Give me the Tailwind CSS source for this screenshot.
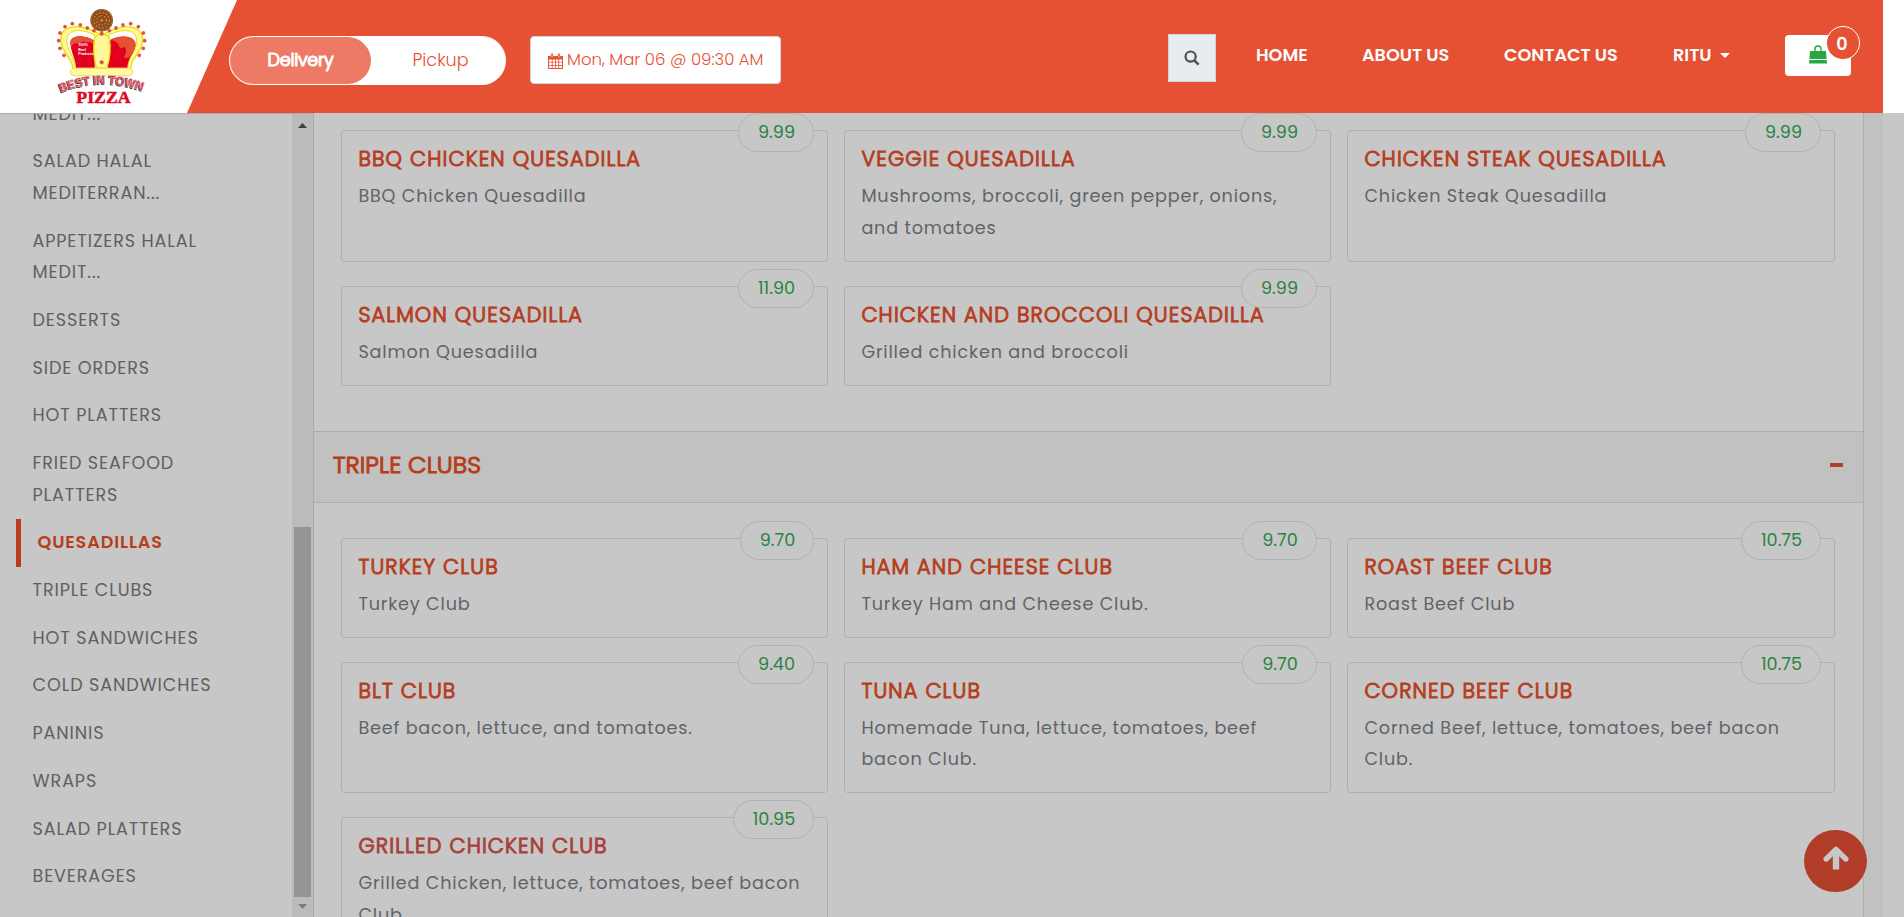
<!DOCTYPE html>
<html lang="en">
<head>
<meta charset="utf-8">
<title>Best in Town Pizza</title>
<script src="https://cdn.jsdelivr.net/npm/@tailwindcss/browser@4"></script>
</head>
<body class="w-[1904px] h-[917px] overflow-hidden bg-[#c7c7c7] font-['Poppins','Inter',sans-serif] flex flex-col">

<header class="h-[113px] w-full shrink-0 flex bg-white">
  <div class="w-[1883px] h-[113px] flex items-start bg-[#e65133]">
    <div class="w-[237px] h-[113px] shrink-0 bg-white pl-10 [clip-path:polygon(0_0,100%_0,187px_100%,0_100%)]">
      <svg class="w-[130px] h-[113px]" viewBox="0 0 390 339">
        <circle cx="185" cy="61" r="34" fill="#8a4a1c"/>
        <circle cx="185" cy="61" r="31" fill="none" stroke="#d08a3c" stroke-width="3" stroke-dasharray="4 4"/>
        <circle cx="185" cy="61" r="23" fill="none" stroke="#c98236" stroke-width="4" stroke-dasharray="5 5"/>
        <circle cx="185" cy="61" r="14" fill="none" stroke="#d08a3c" stroke-width="4" stroke-dasharray="4 5"/>
        <circle cx="185" cy="61" r="5" fill="#c98236"/>
        <path d="M98 206C100 176 62 156 62 118C62 90 88 78 112 80C142 82 166 94 185 108C204 94 228 82 258 80C284 78 308 92 308 120C308 156 270 176 272 206Z" fill="#fff79a" stroke="#e8e000" stroke-width="4"/>
        <path d="M106 200C106 176 80 150 80 122C80 98 100 90 120 92C142 94 158 100 168 110L168 200Z" fill="#fff" stroke="#e8e000" stroke-width="3"/>
        <path d="M264 200C264 176 290 150 290 122C290 98 270 90 250 92C228 94 212 100 202 110L202 200Z" fill="#fff" stroke="#e8e000" stroke-width="3"/>
        <path d="M108 203C108 180 91 152 91 128C92 112 112 106 130 110Q150 112 166 124L164 203Z" fill="#e2001f"/>
        <path d="M91 126C92 110 114 106 132 110Q154 112 166 126L164 136Q150 122 140 128Q128 120 118 132Q100 124 94 142Z" fill="#e65133"/>
        <path d="M204 203L206 122Q240 104 268 112C296 122 286 144 278 160Q264 180 262 203Z" fill="#e2001f"/>
        <path d="M207 124Q240 104 268 112C296 122 286 144 278 160Q262 180 252 172Q264 152 254 140Q240 150 236 134Q222 116 207 124Z" fill="#e65133"/>
        <path d="M164 112Q185 92 208 112Q216 160 200 204H170Q156 160 164 112Z" fill="#fff79a" stroke="#e8e000" stroke-width="4"/>
        <rect x="91" y="205" width="187" height="22" rx="11" fill="#fff9a8" stroke="#f0dc5c" stroke-width="3"/>
        <g fill="#e65133" stroke="#c93a22" stroke-width="1">
          <circle cx="185" cy="101" r="5.5"/><circle cx="185" cy="187" r="5.5"/>
          <circle cx="162" cy="92" r="5"/><circle cx="142" cy="84" r="5"/><circle cx="121" cy="75" r="5"/><circle cx="97" cy="71" r="5"/><circle cx="75" cy="80" r="5"/><circle cx="60" cy="99" r="5"/><circle cx="56" cy="122" r="5"/><circle cx="60" cy="145" r="5"/><circle cx="72" cy="166" r="5"/>
          <circle cx="208" cy="92" r="5"/><circle cx="228" cy="84" r="5"/><circle cx="249" cy="75" r="5"/><circle cx="272" cy="71" r="5"/><circle cx="295" cy="80" r="5"/><circle cx="310" cy="99" r="5"/><circle cx="314" cy="122" r="5"/><circle cx="310" cy="145" r="5"/><circle cx="298" cy="166" r="5"/>
        </g>
        <g fill="#fff" font-family="Liberation Sans, sans-serif" font-weight="700" font-size="11">
          <text x="115" y="138" textLength="28">100%</text><text x="115" y="152" textLength="23">Beef</text><text x="115" y="166" textLength="45">Products</text>
        </g>
        <path id="arc" d="M63 277Q185 228 310 274" fill="none"/>
        <g font-family="Liberation Sans, sans-serif" font-weight="700" font-size="37">
          <text fill="#333" stroke="#333" stroke-width="2.5" transform="translate(-2 2)"><textPath href="#arc" textLength="250" lengthAdjust="spacingAndGlyphs">BEST IN TOWN</textPath></text>
          <text fill="#e5203c" stroke="#f3ccd0" stroke-width="1.5"><textPath href="#arc" textLength="250" lengthAdjust="spacingAndGlyphs">BEST IN TOWN</textPath></text>
        </g>
        <text x="109" y="309" textLength="163" lengthAdjust="spacingAndGlyphs" fill="#dc0a24" stroke="#dc0a24" stroke-width="1.5" font-family="Liberation Serif, serif" font-weight="700" font-size="50">PIZZA</text>
      </svg>
    </div>

    <div class="ml-[-8px] mt-9 w-[277px] h-[49px] shrink-0 rounded-full bg-white p-px flex">
      <div class="w-[141px] h-[47px] rounded-full bg-[#ec7a65] text-white text-[17.6px] font-light [-webkit-text-stroke:1.1px] leading-[47px] text-center tracking-[-0.25px]">Delivery</div>
      <div class="flex-1 pl-[5px] text-[#e65133] text-[17.6px] font-light leading-[47px] text-center">Pickup</div>
    </div>

    <div class="ml-6 mt-9 w-[251px] h-12 shrink-0 rounded bg-white border border-[#ced4da] flex items-center pl-[17px] text-[#e65133]">
      <svg class="w-[15px] h-4 mt-[2px] shrink-0" viewBox="0 0 15 16"><path d="M0 3H15V16H0Z" fill="#e65133"/><path d="M1 6.5h2.8v2.3H1zM4.6 6.5h2.5v2.3H4.6zM7.9 6.5h2.5v2.3H7.9zM11.2 6.5H14v2.3h-2.8zM1 9.6h2.8v2.3H1zM4.6 9.6h2.5v2.3H4.6zM7.9 9.6h2.5v2.3H7.9zM11.2 9.6H14v2.3h-2.8zM1 12.7h2.8V15H1zM4.6 12.7h2.5V15H4.6zM7.9 12.7h2.5V15H7.9zM11.2 12.7H14V15h-2.8z" fill="#fff"/><path d="M3 1.2q1-1.8 2 0V4H3zM10 1.2q1-1.8 2 0V4h-2z" fill="#e65133" stroke="#f7b59f" stroke-width=".6"/></svg>
      <span class="ml-[4px] text-[16.5px] leading-[46px] font-light whitespace-nowrap">Mon, Mar 06 @ 09:30 AM</span>
    </div>

    <div class="ml-[387px] mt-[34px] size-12 shrink-0 bg-[#e9ecef] border border-[#ced4da] flex items-center justify-center">
      <svg class="size-4" viewBox="0 0 16 16" fill="none" stroke="#495057"><circle cx="6.6" cy="6.6" r="5.1" stroke-width="2.2"/><path d="M10.3 10.3L14.6 14.6" stroke-width="2.6"/></svg>
    </div>

    <nav class="mt-[39px] ml-[40px] w-[474px] shrink-0 flex text-white text-[17.6px] leading-8 font-semibold whitespace-nowrap">
      <a class="w-[106px]">HOME</a>
      <a class="w-[142px]">ABOUT US</a>
      <a class="w-[169px]">CONTACT US</a>
      <a class="flex items-center"><span class="w-[47px]">RITU</span><svg class="w-[10px] h-[5px]" viewBox="0 0 10 5"><path d="M0 0H10L5 5Z" fill="#fff"/></svg></a>
    </nav>

    <div class="relative ml-[55px] mt-[35px] w-[66px] h-[41px] shrink-0 rounded bg-white">
      <svg class="ml-6 mt-[10px] w-[18px] h-[19px]" viewBox="0 0 18 19"><path d="M1 6H17L17.6 14H.4ZM.2 15H17.8L18 18.6H0Z" fill="#28a745"/><path d="M6 8V4Q6 1 9 1T12 4V8" fill="none" stroke="#28a745" stroke-width="1.4"/></svg>
      <span class="absolute left-[41px] -top-[9px] size-[34px] rounded-full border border-white bg-[#e65133] text-white text-[17.6px] font-semibold leading-[34px] pr-0.5 text-center">0</span>
    </div>
  </div>
</header>

<div class="flex flex-1 min-h-0">
  <aside class="w-[314px] shrink-0 flex border-t border-[#a9abad] border-r overflow-hidden">
    <ul class="w-[292px] -mt-[15.5px] shrink-0 text-[#606060] text-[17.6px] leading-[31.68px] tracking-[0.88px] whitespace-nowrap *:pl-[32.5px] *:mb-4">
      <li>MEDIT...</li>
      <li>SALAD HALAL<br>MEDITERRAN...</li>
      <li>APPETIZERS HALAL<br>MEDIT...</li>
      <li>DESSERTS</li>
      <li>SIDE ORDERS</li>
      <li>HOT PLATTERS</li>
      <li>FRIED SEAFOOD<br>PLATTERS</li>
      <li class="flex -mt-2 mb-2! pl-4!"><span class="border-l-5 border-[#b63e1a] pl-[16.5px] py-2 font-semibold text-[#b63e1a]">QUESADILLAS</span></li>
      <li>TRIPLE CLUBS</li>
      <li>HOT SANDWICHES</li>
      <li>COLD SANDWICHES</li>
      <li>PANINIS</li>
      <li>WRAPS</li>
      <li>SALAD PLATTERS</li>
      <li>BEVERAGES</li>
    </ul>
    <div class="w-[21px] bg-[#bbbbbb] shrink-0 flex flex-col items-center">
      <svg class="mt-[9px] w-[9px] h-[5px] shrink-0" viewBox="0 0 9 5"><path d="M0 5L4.5 0L9 5Z" fill="#3f3f3f"/></svg>
      <div class="mt-[399px] h-[370px] w-[17px] shrink-0 bg-[#959595]"></div>
      <svg class="mt-[7px] w-[9px] h-[5px] shrink-0" viewBox="0 0 9 5"><path d="M0 0L4.5 5L9 0Z" fill="#7c7c7c"/></svg>
    </div>
  </aside>

  <main id="menu" class="w-[1550px] shrink-0 border-r border-[#aeaeae] overflow-hidden">
    <div data-group="quesadillas" class="grid grid-cols-[487px_487px_488px] gap-x-4 gap-y-6 pl-[27px] pt-[17px]"></div>
    <div class="mt-[45px] h-[72px] border-y border-[#abadae] bg-[#c1c1c1] flex items-center justify-between pl-[19px] pr-[20px] pb-[4px]">
      <h2 class="text-[24px] font-light [-webkit-text-stroke:1.1px] text-[#b63e1a] tracking-[0.1px]">TRIPLE CLUBS</h2>
      <span class="w-[13px] h-[4px] bg-[#b63e28]"></span>
    </div>
    <div data-group="clubs" class="grid grid-cols-[487px_487px_488px] gap-x-4 gap-y-6 pl-[27px] pt-[35px]"></div>
  </main>
  <div class="w-[19px] bg-[#c1c1c1]"></div>
</div>

<button class="fixed left-[1804px] top-[830px] w-[63px] h-[62px] rounded-full bg-[#b13d28] flex items-center justify-center">
  <svg class="w-[26px] h-6 -mt-1.5" viewBox="0 0 26 24" fill="none" stroke="#c7c7c7"><path d="M13 3V23.5" stroke-width="6.4"/><path d="M3.2 13L13 3.4L22.8 13" stroke-width="5.4" stroke-linecap="round" stroke-linejoin="round"/></svg>
</button>

<script>
const menu = {
  quesadillas: [
    ["BBQ CHICKEN QUESADILLA", "BBQ Chicken Quesadilla", "9.99", 76],
    ["VEGGIE QUESADILLA", "Mushrooms, broccoli, green pepper, onions,<br>and tomatoes", "9.99", 76],
    ["CHICKEN STEAK QUESADILLA", "Chicken Steak Quesadilla", "9.99", 76],
    ["SALMON QUESADILLA", "Salmon Quesadilla", "11.90", 76],
    ["CHICKEN AND BROCCOLI QUESADILLA", "Grilled chicken and broccoli", "9.99", 76]
  ],
  clubs: [
    ["TURKEY CLUB", "Turkey Club", "9.70", 74],
    ["HAM AND CHEESE CLUB", "Turkey Ham and Cheese Club.", "9.70", 75],
    ["ROAST BEEF CLUB", "Roast Beef Club", "10.75", 80],
    ["BLT CLUB", "Beef bacon, lettuce, and tomatoes.", "9.40", 76],
    ["TUNA CLUB", "Homemade Tuna, lettuce, tomatoes, beef<br>bacon Club.", "9.70", 75],
    ["CORNED BEEF CLUB", "Corned Beef, lettuce, tomatoes, beef bacon<br>Club.", "10.75", 80],
    ["GRILLED CHICKEN CLUB", "Grilled Chicken, lettuce, tomatoes, beef bacon<br>Club.", "10.95", 81]
  ]
};
for (const [group, items] of Object.entries(menu)) {
  document.querySelector(`[data-group="${group}"]`).innerHTML = items.map(([title, desc, price, w]) => `
    <article class="relative rounded border border-[#aeafb0] pl-[16.4px] pr-4 pt-4 pb-[16.3px]">
      <span style="width:${w}px" class="absolute right-[13px] -top-[18px] h-[39px] rounded-full border border-[#b1b2b3] bg-[#c7c7c7] text-[#2a8340] text-[17.6px] leading-[37px] pl-px text-center">${price}</span>
      <h3 class="h-6 mb-[10px] text-[20.8px] leading-6 font-light [-webkit-text-stroke:1px] tracking-[1.18px] whitespace-nowrap ${title.startsWith("GRILLED") ? "text-[#a7423a]" : "text-[#b63e1f]"}">${title}</h3>
      <p class="text-[17.6px] leading-[31.68px] tracking-[0.83px] text-[#606467] whitespace-nowrap">${desc}</p>
    </article>`).join("");
}
</script>
</body>
</html>
